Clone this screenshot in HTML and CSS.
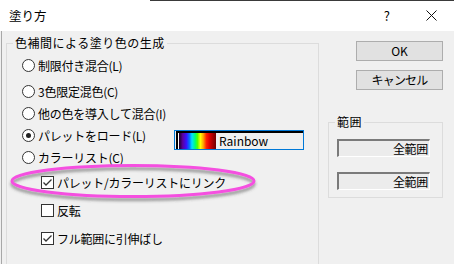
FILE: index.html
```html
<!DOCTYPE html>
<html lang="ja">
<head>
<meta charset="utf-8">
<title>塗り方</title>
<link rel="stylesheet" href="styles.css">
</head>
<body>
<div class="window">
  <div class="titlebar">
    <span class="title">塗り方</span>
    <span class="help">?</span>
    <span class="close"><svg width="11" height="11" viewBox="0 0 11 11"><path d="M0.5 0.5L10.5 10.5M10.5 0.5L0.5 10.5" stroke="#111" stroke-width="1" fill="none"/></svg></span>
  </div>
  <div class="content">
    <fieldset class="group main">
      <legend>色補間による塗り色の生成</legend>
      <div class="radio r1"><span class="rb"></span><span>制限付き混合(L)</span></div>
      <div class="radio r2"><span class="rb"></span><span>3色限定混色(C)</span></div>
      <div class="radio"><span class="rb"></span><span>他の色を導入して混合(I)</span></div>
      <div class="radio"><span class="rb on"></span><span class="lbl">パレットをロード(L)</span>
        <div class="palette"><div class="pal-in"><span class="pal-k"></span><span class="pal-w"></span><span class="pal-grad"></span><span class="pal-name">Rainbow</span></div></div>
      </div>
      <div class="radio"><span class="rb"></span><span>カラーリスト(C)</span></div>
      <div class="check"><span class="cb"><svg width="11" height="11" viewBox="0 0 11 11"><path d="M1.5 5.5L4 8L9.5 2.5" stroke="#333" stroke-width="1.3" fill="none"/></svg></span><span>パレット/カラーリストにリンク</span></div>
      <div class="check"><span class="cb"></span><span>反転</span></div>
      <div class="check"><span class="cb"><svg width="11" height="11" viewBox="0 0 11 11"><path d="M1.5 5.5L4 8L9.5 2.5" stroke="#333" stroke-width="1.3" fill="none"/></svg></span><span>フル範囲に引伸ばし</span></div>
    </fieldset>
    <div class="side">
      <button class="btn">OK</button>
      <button class="btn cancel">キャンセル</button>
      <fieldset class="group range">
        <legend>範囲</legend>
        <div class="field">全範囲</div>
        <div class="field second">全範囲</div>
      </fieldset>
    </div>
  </div>
  <svg class="ellipse" width="262" height="48" viewBox="0 0 262 48">
    <defs>
      <filter id="sh" x="-10%" y="-40%" width="120%" height="180%">
        <feDropShadow dx="0" dy="3" stdDeviation="1.6" flood-color="#444" flood-opacity="0.55"/>
      </filter>
    </defs>
    <ellipse cx="125" cy="21" rx="121" ry="15.5" fill="none" stroke="#f54fe0" stroke-width="3" filter="url(#sh)"/>
  </svg>
</div>
</body>
</html>
```
FILE: styles.css
```css
html, body {
  margin: 0;
  padding: 0;
}
body {
  width: 454px;
  height: 264px;
  overflow: hidden;
  background: #f0f0f0;
  font-family: "Noto Sans CJK JP", "Noto Sans", sans-serif;
  font-size: 12px;
  color: #000;
}
.window {
  position: relative;
  width: 454px;
  height: 264px;
  overflow: hidden;
}
.titlebar {
  height: 31px;
  display: flex;
  align-items: center;
  background: linear-gradient(to right, #fff 150px, #3a3a3a 150px) top left / 100% 1px no-repeat, #fff;
}
.title {
  margin-left: 9px;
  font-size: 12.5px;
  line-height: 14px;
}
.help {
  margin-left: auto;
  margin-right: 36px;
  font-size: 13px;
  line-height: 14px;
}
.close {
  display: flex;
  margin-right: 17px;
}
.content {
  height: 233px;
  display: flex;
  align-items: flex-start;
  background: linear-gradient(to right, #f0f0f0 1px, #a8a8a8 1px, #a8a8a8 2px, #f0f0f0 2px);
  overflow: hidden;
}
.group {
  margin: 0;
  border: 1px solid #dcdcdc;
  box-sizing: border-box;
  min-width: 0;
}
.group legend {
  padding: 0 2px;
  line-height: 14px;
  letter-spacing: 0.5px;
}
.main {
  margin-left: 6px;
  margin-top: 5px;
  width: 313px;
  height: 260px;
  padding: 4px 0 0 6px;
}
.radio {
  height: 22px;
  display: flex;
  align-items: center;
  margin-left: 9px;
  letter-spacing: -0.25px;
}
.radio.r2 {
  margin-top: 4px;
}
.rb {
  width: 13px;
  height: 13px;
  box-sizing: border-box;
  border: 1px solid #333;
  border-radius: 50%;
  background: #fff;
  margin-right: 3px;
  display: flex;
  align-items: center;
  justify-content: center;
  flex: none;
}
.rb.on::after {
  content: "";
  width: 5px;
  height: 5px;
  border-radius: 50%;
  background: #222;
}
.lbl {
  width: 136px;
}
.palette {
  align-self: flex-start;
  margin-top: 6px;
  width: 130px;
  height: 20px;
  box-sizing: border-box;
  border: 1px solid #0078d7;
  background: #f0f0f0;
  padding-left: 1px;
  flex: none;
}
.pal-in {
  height: 18px;
  box-sizing: border-box;
  border-top: 2px solid #000;
  display: flex;
  align-items: stretch;
}
.pal-k {
  width: 2px;
  background: #000;
}
.pal-w {
  width: 1px;
  background: #fff;
}
.pal-grad {
  width: 37px;
  background: linear-gradient(to right, #1a0020 0%, #5a00a0 10%, #3a10ff 20%, #0070ff 28%, #00e0ff 35%, #00ff70 44%, #50ff00 50%, #ffff00 58%, #ffa000 66%, #ff2000 74%, #e00000 82%, #a00000 92%, #700000 100%);
}
.pal-name {
  margin-left: 3px;
  font-size: 12px;
  line-height: 16px;
  letter-spacing: 0;
}
.check {
  height: 28px;
  display: flex;
  align-items: center;
  margin-left: 28px;
  letter-spacing: -0.25px;
}
.cb {
  width: 13px;
  height: 13px;
  box-sizing: border-box;
  border: 1px solid #333;
  background: #fff;
  margin-right: 3px;
  display: flex;
  flex: none;
}
.side {
  display: flex;
  flex-direction: column;
  align-items: flex-start;
  padding-top: 10px;
}
.btn {
  margin: 0 0 0 37px;
  width: 87px;
  height: 20px;
  box-sizing: border-box;
  border: 1px solid #adadad;
  background: #e1e1e1;
  font-family: inherit;
  font-size: 12px;
  line-height: 16px;
  padding: 0;
  color: #000;
}
.btn.cancel {
  margin-top: 9px;
  letter-spacing: -0.8px;
}
.range {
  margin-left: 9px;
  margin-top: 25px;
  width: 115px;
  padding: 10px 0 7px 6px;
}
.field {
  margin-left: 2px;
  width: 93px;
  height: 18px;
  box-sizing: border-box;
  border-top: 2px solid #7a7a7a;
  border-left: 2px solid #7a7a7a;
  border-right: 1px solid #fff;
  border-bottom: 1px solid #fff;
  background: #ececec;
  text-align: right;
  padding-right: 1px;
  line-height: 15px;
  letter-spacing: -0.3px;
}
.field.second {
  margin-top: 15px;
}
.ellipse {
  position: absolute;
  left: 8px;
  top: 160px;
}
```
